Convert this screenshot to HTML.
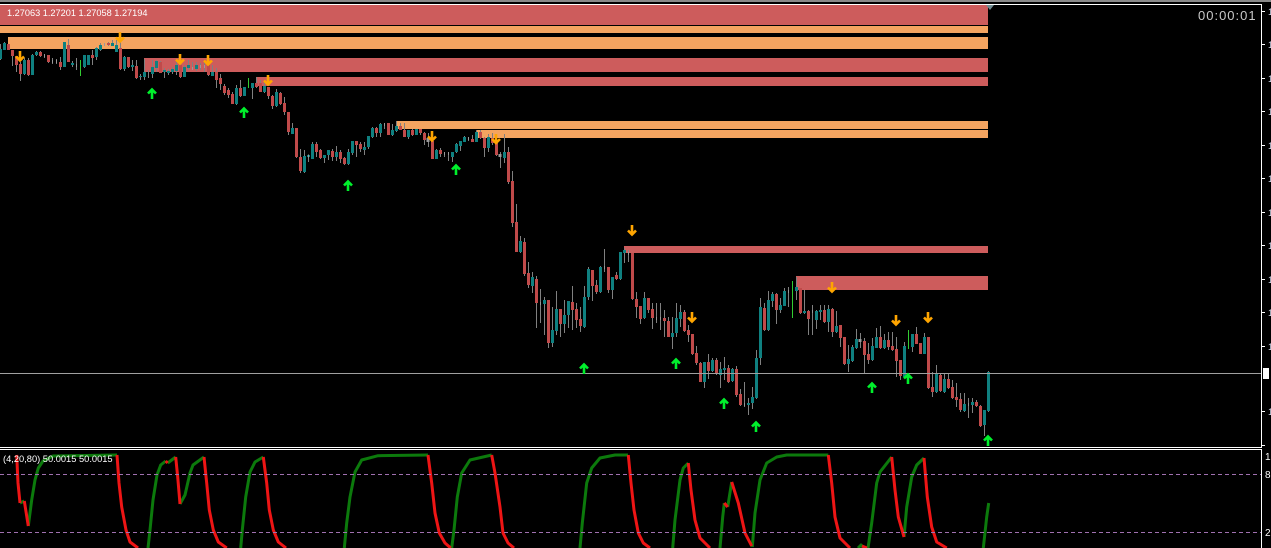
<!DOCTYPE html>
<html><head><meta charset="utf-8"><style>
html,body{margin:0;padding:0;background:#000;width:1271px;height:548px;overflow:hidden}
svg{display:block;position:absolute;left:0;top:0}
text{font-family:"Liberation Sans",sans-serif}
</style></head><body>
<svg width="1271" height="548" viewBox="0 0 1271 548">
<rect width="1271" height="548" fill="#000"/>
<rect x="0" y="0" width="1271" height="2" fill="#8a8a8a"/>
<g shape-rendering="crispEdges">
<rect x="0" y="5" width="988" height="20" fill="#cd5c5c"/>
<rect x="0" y="26" width="988" height="7" fill="#f4a460"/>
<rect x="8" y="37" width="980" height="12" fill="#f4a460"/>
<rect x="144" y="58" width="844" height="14" fill="#cd5c5c"/>
<rect x="256" y="77" width="732" height="9" fill="#cd5c5c"/>
<rect x="397" y="121" width="591" height="8" fill="#f4a460"/>
<rect x="477" y="130" width="511" height="8" fill="#f4a460"/>
<rect x="624" y="246" width="364" height="7" fill="#cd5c5c"/>
<rect x="796" y="276" width="192" height="14" fill="#cd5c5c"/>
<path fill="none" stroke="#808080" stroke-width="1" d="M0.5 44V60M4.5 42V50M12.5 50V66M16.5 56V72M20.5 62V81M24.5 58V75M28.5 58V76M32.5 54V75M36.5 51V56M40.5 51V57M44.5 54V58M48.5 55V63M52.5 58V64M56.5 59V64M60.5 57V70M64.5 42V67M68.5 39V62M72.5 61V67M76.5 58V70M84.5 55V68M88.5 55V65M92.5 50V65M96.5 47V60M100.5 43V51M104.5 43V46M108.5 42V46M112.5 40V46M116.5 40V52M120.5 40V70M124.5 56V71M128.5 57V68M132.5 60V71M136.5 60V79M140.5 74V80M144.5 59V80M148.5 70V78M152.5 60V78M156.5 60V72M160.5 61V73M164.5 68V78M168.5 69V75M172.5 67V74M176.5 62V75M180.5 58V78M184.5 65V77M188.5 60V70M192.5 62V70M196.5 62V71M200.5 63V70M204.5 60V72M208.5 62V76M212.5 65V76M216.5 68V88M220.5 74V90M224.5 84V95M228.5 88V98M232.5 92V104M236.5 85V105M240.5 80V97M244.5 87V96M252.5 83V99M256.5 77V88M260.5 80V92M264.5 80V93M268.5 87V99M272.5 95V109M276.5 89V107M280.5 92V105M284.5 97V115M288.5 112V135M292.5 123V134M296.5 128V158M300.5 149V173M304.5 150V173M308.5 155V162M312.5 142V159M316.5 142V157M320.5 149V159M324.5 155V163M328.5 150V160M332.5 149V161M336.5 146V161M340.5 150V163M344.5 157V165M348.5 149V165M352.5 141V155M356.5 141V157M360.5 142V152M364.5 142V155M368.5 136V149M372.5 127V138M376.5 127V137M380.5 123V137M384.5 123V129M388.5 123V135M392.5 124V136M396.5 121V132M400.5 123V130M404.5 123V137M408.5 130V139M412.5 129V136M416.5 129V135M420.5 129V135M424.5 132V145M428.5 133V147M432.5 140V159M436.5 149V159M440.5 148V157M444.5 152V157M448.5 152V161M452.5 152V162M456.5 143V153M460.5 141V151M464.5 136V142M468.5 137V141M472.5 135V142M476.5 130V142M480.5 130V139M484.5 137V157M488.5 134V152M492.5 133V145M496.5 142V156M500.5 152V168M504.5 134V163M508.5 147V184M512.5 171V227M516.5 204V252M520.5 236V253M524.5 238V276M528.5 262V288M532.5 272V293M536.5 276V328M540.5 289V323M544.5 297V335M548.5 300V348M552.5 307V347M556.5 291V335M560.5 309V337M564.5 300V333M568.5 301V328M572.5 286V330M576.5 303V328M580.5 307V332M584.5 286V328M588.5 267V300M592.5 270V301M596.5 280V294M600.5 266V293M604.5 249V272M608.5 267V293M612.5 277V299M616.5 272V280M620.5 252V280M624.5 248V263M628.5 250V262M632.5 253V300M636.5 292V318M640.5 306V324M644.5 292V319M648.5 298V313M652.5 303V329M656.5 303V323M660.5 303V330M664.5 310V337M668.5 317V337M672.5 317V349M676.5 303V337M680.5 305V327M684.5 310V332M688.5 325V342M692.5 334V355M696.5 346V365M700.5 362V382M704.5 362V388M708.5 354V379M712.5 358V372M716.5 358V375M720.5 362V388M724.5 357V380M728.5 365V383M732.5 368V382M736.5 366V397M740.5 389V406M744.5 382V407M748.5 398V415M752.5 387V409M756.5 350V399M760.5 298V365M764.5 303V331M768.5 291V331M772.5 292V307M776.5 293V324M780.5 298V313M784.5 288V306M788.5 287V307M796.5 277V300M800.5 288V314M804.5 290V314M808.5 310V335M812.5 305V335M816.5 310V329M820.5 305V320M824.5 305V323M828.5 305V332M832.5 308V337M836.5 311V333M840.5 325V347M844.5 337V365M848.5 345V372M852.5 345V362M856.5 329V349M860.5 333V348M864.5 338V374M868.5 343V364M872.5 338V361M876.5 328V348M880.5 326V349M884.5 334V349M888.5 332V350M892.5 332V351M896.5 337V377M900.5 360V380M904.5 342V378M912.5 334V352M916.5 327V344M920.5 343V354M924.5 333V354M928.5 337V389M932.5 372V397M936.5 365V393M940.5 374V392M944.5 373V393M948.5 373V389M952.5 380V399M956.5 383V407M960.5 393V412M964.5 393V412M968.5 398V418M972.5 398V413M976.5 400V407M980.5 405V427M984.5 410V436M988.5 371V412"/>
<path fill="none" stroke="#0f8080" stroke-width="3" d="M0.5 49V59M4.5 43V50M24.5 60V74M32.5 55V75M36.5 52V55M64.5 42V67M72.5 63V65M84.5 55V67M88.5 55V65M96.5 48V57M100.5 45V50M112.5 43V46M116.5 45V52M124.5 57V69M132.5 65V67M140.5 76V77M144.5 72V77M152.5 67V74M156.5 61V68M164.5 70V72M168.5 71V73M172.5 69V72M176.5 65V71M184.5 67V77M188.5 65V68M196.5 65V69M212.5 72V76M236.5 88V104M244.5 87V96M252.5 83V88M264.5 86V92M276.5 92V106M292.5 128V134M304.5 156V172M308.5 155V157M312.5 144V159M324.5 155V158M328.5 150V155M336.5 152V157M348.5 152V164M352.5 141V153M364.5 147V150M368.5 136V147M372.5 128V137M380.5 124V133M392.5 130V135M396.5 126V131M408.5 130V137M416.5 129V135M436.5 150V159M452.5 152V157M456.5 144V152M460.5 141V146M464.5 137V142M476.5 132V142M488.5 137V148M504.5 152V158M520.5 241V252M532.5 277V286M544.5 300V304M552.5 330V343M556.5 309V331M564.5 315V324M568.5 301V315M584.5 297V327M588.5 269V297M600.5 267V292M612.5 277V290M620.5 252V279M624.5 250V253M644.5 298V318M672.5 333V337M676.5 318V333M680.5 312V319M704.5 362V382M712.5 360V371M720.5 369V375M724.5 368V370M732.5 369V381M748.5 403V405M752.5 397V403M756.5 358V398M760.5 307V358M768.5 300V330M772.5 294V301M780.5 305V310M784.5 291V306M796.5 287V291M804.5 311V313M816.5 311V320M820.5 310V312M828.5 309V322M836.5 326V332M848.5 359V364M852.5 347V361M856.5 339V348M872.5 346V360M876.5 337V348M884.5 340V348M904.5 346V377M912.5 334V347M924.5 337V354M936.5 373V392M944.5 379V392M964.5 404V411M972.5 402V405M984.5 410V425M988.5 372V411"/>
<path fill="none" stroke="#c04a4a" stroke-width="3" d="M8.5 44V50M12.5 50V56M16.5 56V65M20.5 64V74M28.5 60V75M40.5 52V56M48.5 55V62M60.5 62V67M68.5 45V62M92.5 55V58M108.5 43V45M120.5 48V69M128.5 57V67M136.5 66V78M160.5 62V73M180.5 65V77M208.5 65V75M216.5 72V80M220.5 78V84M224.5 86V93M228.5 90V95M232.5 94V104M240.5 88V96M256.5 83V87M260.5 83V92M268.5 87V96M272.5 96V106M280.5 93V104M284.5 103V112M288.5 112V132M296.5 128V157M300.5 157V171M316.5 144V152M320.5 150V158M332.5 151V157M340.5 152V159M344.5 158V164M356.5 141V145M360.5 144V149M376.5 128V133M388.5 123V135M400.5 126V130M404.5 130V137M412.5 130V135M420.5 129V133M424.5 133V140M432.5 141V159M440.5 150V154M472.5 139V142M480.5 132V138M484.5 138V148M492.5 138V143M496.5 143V155M508.5 152V182M512.5 181V223M516.5 222V252M524.5 242V274M528.5 273V285M536.5 279V303M548.5 300V343M560.5 309V324M572.5 302V310M576.5 309V320M580.5 319V326M592.5 270V286M596.5 285V292M608.5 267V290M616.5 275V279M632.5 253V299M636.5 299V307M640.5 306V319M648.5 298V310M652.5 309V318M664.5 318V321M668.5 321V337M684.5 312V331M688.5 330V335M692.5 334V354M696.5 353V363M700.5 363V382M708.5 362V371M716.5 360V374M728.5 368V382M736.5 369V395M740.5 394V405M764.5 308V330M776.5 294V310M800.5 288V313M808.5 311V319M824.5 310V322M832.5 309V332M840.5 325V338M844.5 337V364M864.5 341V355M868.5 354V360M880.5 337V348M888.5 340V347M892.5 346V350M896.5 349V361M900.5 360V376M916.5 334V344M920.5 343V354M928.5 337V388M932.5 387V392M940.5 375V391M948.5 379V388M952.5 387V398M956.5 397V400M960.5 399V410M976.5 402V406M980.5 406V426"/>
<path fill="none" stroke="#9a9a9a" stroke-width="3" d="M44 55.5h1M52 61.5h1M56 61.5h1M76 65.5h1M104 44.5h1M192 68.5h1M200 66.5h1M204 66.5h1M308 156h1M384 124.5h1M428 138V142M444 153.5h1M448 153.5h1M468 138.5h1M500 154V157M540 303.5h1M604 267.5h1M628 253.5h1M656 318.5h1M660 318.5h1M744 404.5h1M788 291.5h1M812 311.5h1M860 339V342M968 404.5h1"/>
<path fill="none" stroke="#32cd32" stroke-width="1" d="M80.5 60V76M248.5 78V88M792.5 281V318M908.5 330V349"/>
<path fill="none" stroke="#a0a0a0" stroke-width="1" d="M0 373.5H1262"/>
</g>
<g fill="none" stroke-width="3" stroke-linejoin="round">
<path stroke="#0c7a0c" d="M28.3 526L31.7 500L35 480L38.3 468L43 461L53 456L117 455M20 503L24.3 501M148 548L150 530L153 500L157 475L160.7 465L165.7 461M167.7 463L175.7 457M180 504L185 495L190 473L193 465L204 457M240.7 548L242.3 530L245.7 497L250 472L255 462L263.3 457M344.3 548L346.7 523L350 497L355 472L361.7 460L378 455.7L428 455M451.7 548L454 530L457.3 497L461.7 473L470 460L491.7 455M580 548L582.3 523L586.7 483L591.7 468L600 458L615 455L628 455M672.7 548L675 520L680 480L683.3 468L688.3 463M720 548L722.7 517L724.3 503M727.7 507L731.7 482M752.3 547L755 513L760 480L766.7 463L776.7 457L786.7 455L828.3 455M858 548L861 545L863 547M868 548L871.7 523L876.7 483L880 472L891.7 457M904 537L906.7 507L911.7 477L916.7 465L924 458M983.3 548L986.7 517L988.7 503"/>
<path stroke="#ee1515" d="M16.7 455L18 483L20 503M24.3 501L28.3 526M117 455L119 483L121.7 507L126 530L130 542L138 548M165.7 461L167.7 463M175.7 457L177.7 477L180 504M204 457L206.7 483L209.3 510L213.3 530L218.3 542L226.7 548M263.3 457L266.7 483L269.3 510L273.3 530L278.3 542L286 548M428 455L431.7 483L435 513L439.3 533L445 543L450.7 548M491.7 455L495 473L500 507L503 533L508 543L514 548M628.3 455L631 483L634 510L638.3 533L643.3 543L650 548M688.3 463L691 490L695 520L700 538L710 548M724.3 503L727.7 507M731.7 482L738.3 503L745 533L751.7 546M828.3 455L831.7 483L835 517L840 538L850 548M862 546L867 548M891.7 457L895 490L898.3 517L904 537M924 458L927.3 497L931.7 527L936.7 542L946.7 548"/>
</g>
<path stroke="#a070b0" stroke-width="1" stroke-dasharray="4 3" fill="none" d="M0 474.5H1262M0 532.5H1262" shape-rendering="crispEdges"/>
<g fill="none" stroke="#ffa500" stroke-width="2.6">
<path d="M20 51V60M16 56.5L20 60.5L24 56.5M120 32V41M116 37.5L120 41.5L124 37.5M180 54V63M176 59.5L180 63.5L184 59.5M208 55V64M204 60.5L208 64.5L212 60.5M268 75V84M264 80.5L268 84.5L272 80.5M432 131V140M428 136.5L432 140.5L436 136.5M496 134V143M492 139L496 143L500 139M632 225V234M628 230.5L632 234.5L636 230.5M692 312V321M688 317.5L692 321.5L696 317.5M832 282V291M828 287.5L832 291.5L836 287.5M896 315V324M892 320.5L896 324.5L900 320.5M928 312V321M924 317.5L928 321.5L932 317.5"/>
</g>
<g fill="none" stroke="#00f02c" stroke-width="2.6">
<path d="M152 99V90M148 93.5L152 89.5L156 93.5M244 118V109M240 112.5L244 108.5L248 112.5M348 191V182M344 185.5L348 181.5L352 185.5M456 175V166M452 169.5L456 165.5L460 169.5M584 374V365M580 368.5L584 364.5L588 368.5M676 369V360M672 363.5L676 359.5L680 363.5M724 409V400M720 403.5L724 399.5L728 403.5M756 432V423M752 426.5L756 422.5L760 426.5M872 393V384M868 387.5L872 383.5L876 387.5M908 384V375M904 378.5L908 374.5L912 378.5M988 446V437M984 440.5L988 436.5L992 440.5"/>
</g>
<path d="M986 5H994L990 10Z" fill="#708a90"/>
<g shape-rendering="crispEdges" fill="#fff">
<rect x="0" y="4" width="1262" height="1"/>
<rect x="1261" y="4" width="1" height="443"/>
<rect x="0" y="447" width="1262" height="1"/>
<rect x="0" y="449" width="1262" height="1"/>
<rect x="1261" y="449" width="1" height="99"/>
<path stroke="#fff" stroke-width="1" fill="none" d="M1262 11.5h3M1262 44.5h3M1262 78.5h3M1262 111.5h3M1262 145.5h3M1262 178.5h3M1262 212.5h3M1262 245.5h3M1262 279.5h3M1262 312.5h3M1262 346.5h3M1262 411.5h3M1262 445.5h3"/>
<rect x="1263" y="368" width="6" height="11"/>
</g>
<g fill="#cfd8ea" font-size="9">
<text x="1268" y="15">1</text><text x="1268" y="48">1</text><text x="1268" y="82">1</text><text x="1268" y="115">1</text><text x="1268" y="149">1</text><text x="1268" y="182">1</text><text x="1268" y="216">1</text><text x="1268" y="249">1</text><text x="1268" y="283">1</text><text x="1268" y="316">1</text><text x="1268" y="350">1</text><text x="1268" y="415">1</text>
</g>
<g fill="#fff" font-size="10">
<text x="1265" y="460">1</text><text x="1265" y="478">8</text><text x="1265" y="536">2</text>
</g>
<text x="7" y="16" font-size="9.2" fill="#fff">1.27063 1.27201 1.27058 1.27194</text>
<text x="1198" y="20" font-size="13" letter-spacing="1" fill="#c8c8c8">00:00:01</text>
<text x="3" y="462" font-size="9.3" fill="#fff">(4,20,80) 50.0015 50.0015</text>
</svg>
</body></html>
